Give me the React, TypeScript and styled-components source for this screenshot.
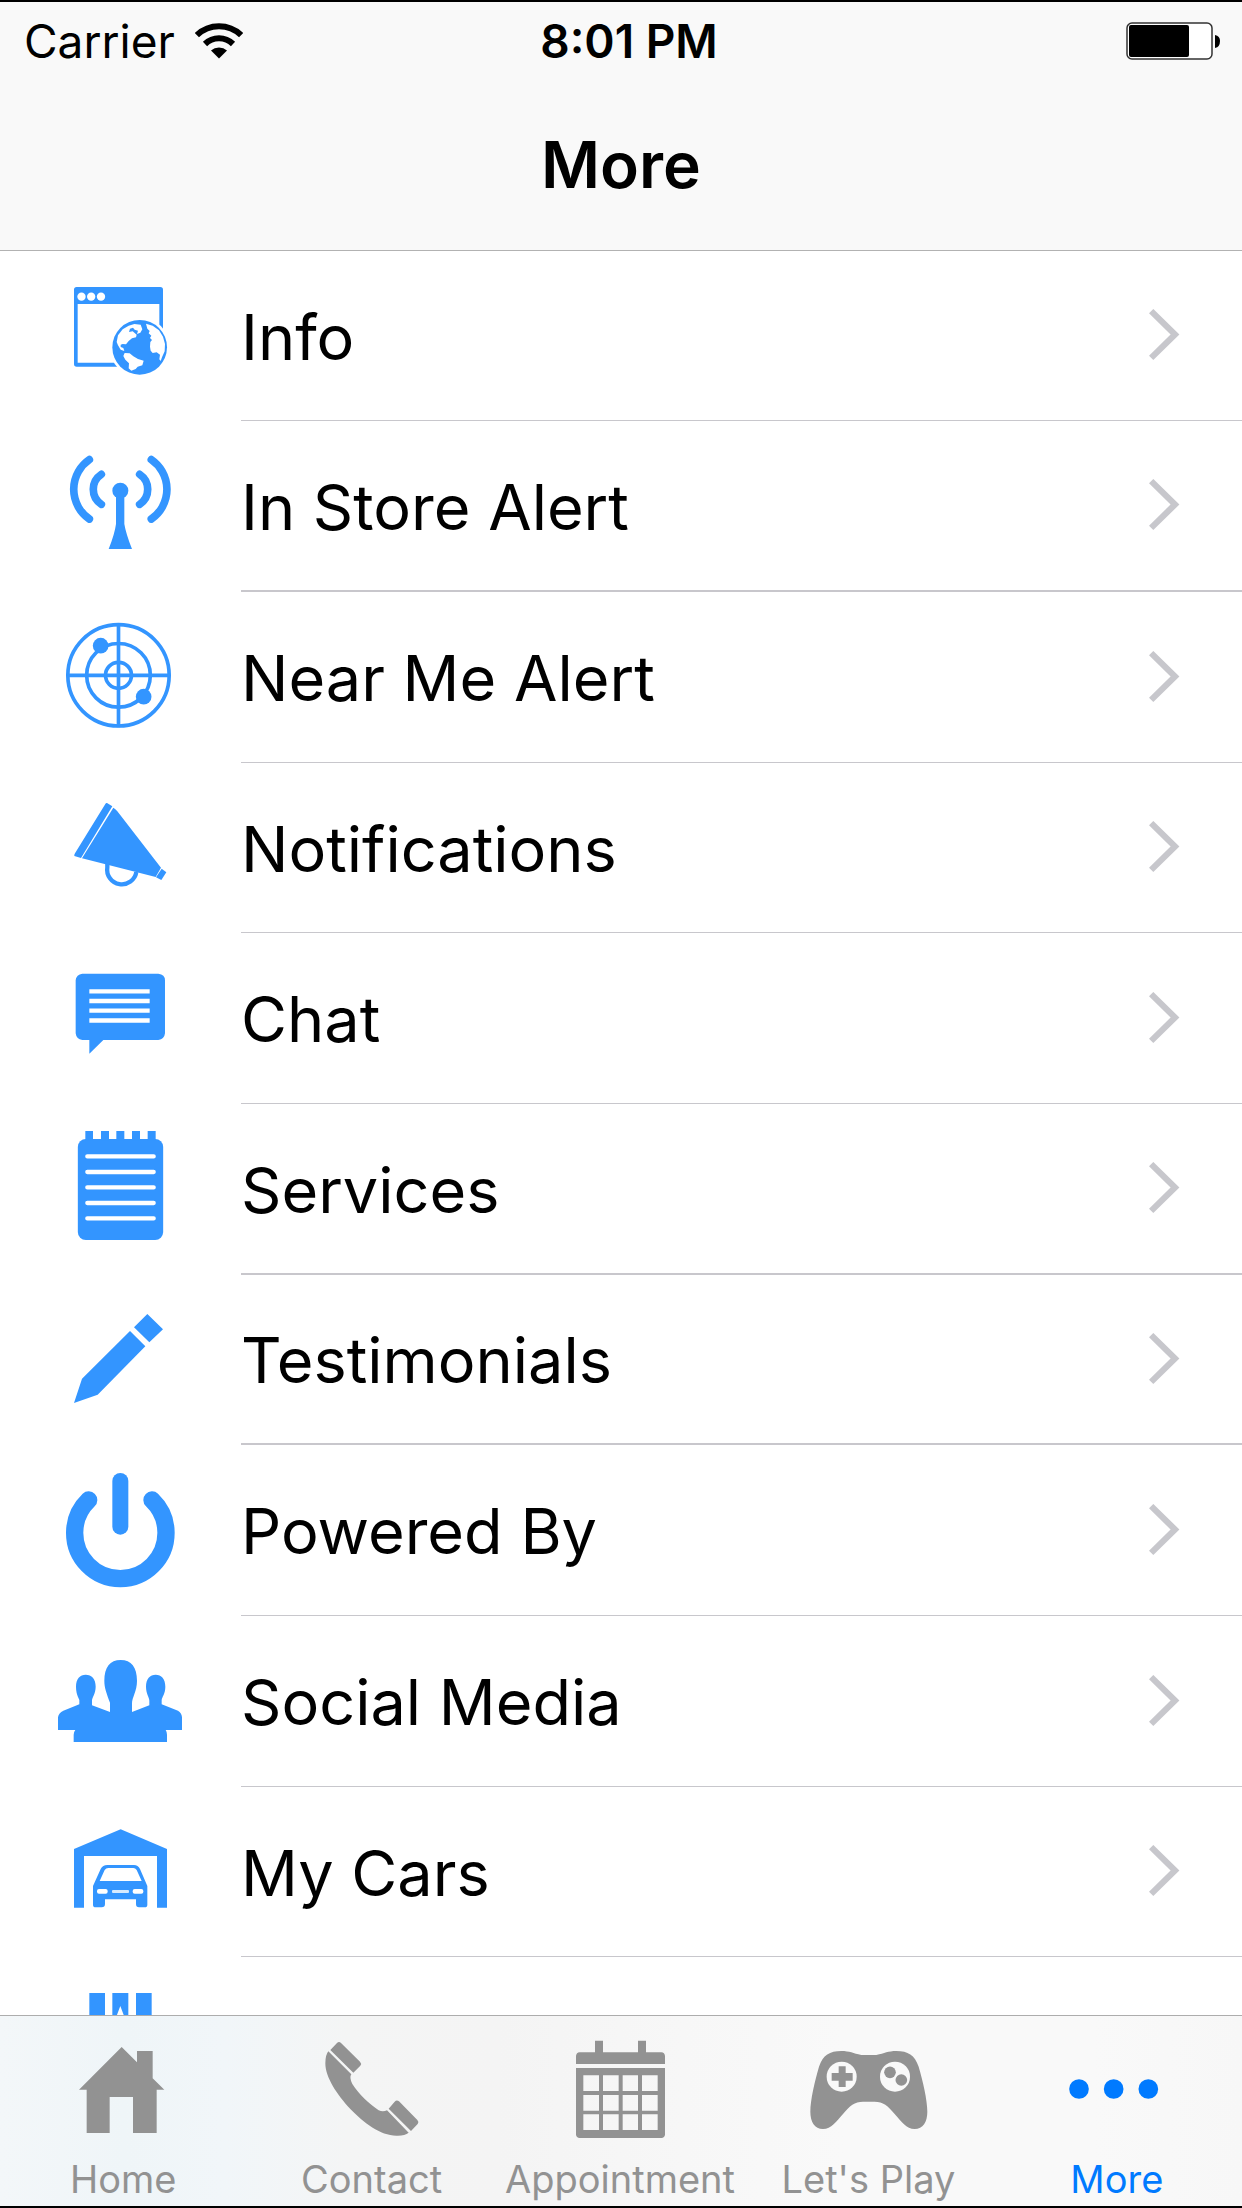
import React from "react";
import styled, { createGlobalStyle } from "styled-components";

const BLUE = "#3395ff";
const TINT = "#007aff";
const GRAY = "#929292";
const HAIRLINE = "#c8c7cc";

const GlobalStyle = createGlobalStyle`
  *, *::before, *::after { box-sizing: border-box; }
  body {
    margin: 0;
    background: #ffffff;
    color: #000000;
    font-family: Inter, "Liberation Sans", sans-serif;
  }
`;

const Screen = styled.div`
  display: flex;
  flex-direction: column;
  height: 100vh;
  border-top: 2px solid #000000;
  border-bottom: 2px solid #000000;
  overflow: hidden;
`;

const Header = styled.header`
  flex: none;
  background: #f9f9f9;
  border-bottom: 1px solid #b2b2b2;
`;

const StatusBar = styled.div`
  display: grid;
  grid-template-columns: 1fr auto 1fr;
  align-items: center;
  height: 78px;
  padding: 0 8px 0 24px;
  font-size: 46px;
  line-height: 56px;
`;

const Carrier = styled.div`
  display: flex;
  align-items: center;
  gap: 20px;
`;

const Time = styled.time`
  font-weight: 600;
`;

const Battery = styled.svg`
  justify-self: end;
  margin-right: 14px;
`;

const TitleBar = styled.div`
  display: flex;
  align-items: center;
  justify-content: center;
  height: 170px;
`;

const Title = styled.h1`
  margin: 0;
  font-size: 64px;
  font-weight: 600;
  line-height: 78px;
`;

const Main = styled.main`
  flex: 1;
  min-height: 0;
  overflow: hidden;
`;

const List = styled.ul`
  margin: 0;
  padding: 0;
  list-style: none;
`;

const Item = styled.li`
  height: 171px;

  &:nth-child(3n + 1) {
    height: 170px;
  }
`;

const RowLink = styled.a`
  display: flex;
  height: 100%;
  color: inherit;
  text-decoration: none;
`;

const RowIcon = styled.svg`
  flex: none;
  width: 132px;
  height: 132px;
  margin: 18px 55px 0 54px;
  fill: ${BLUE};
`;

const RowBody = styled.span<{ $heavy?: boolean }>`
  flex: 1;
  display: flex;
  align-items: center;
  justify-content: space-between;
  padding: 2px 62px 0 0;
  border-bottom: ${(p) => (p.$heavy ? 2 : 1)}px solid ${HAIRLINE};
  font-size: 63px;
  line-height: 78px;
`;

const TabBar = styled.nav`
  flex: none;
  display: flex;
  border-top: 1px solid #adadad;
  background: linear-gradient(
    to right,
    #f3f7f9 0%,
    #eff5f8 10%,
    #f1f6f9 18%,
    #f4f5f5 28%,
    #f4f4f4 40%,
    #f7f7f7 55%,
    #f9f9f9 68%,
    #f9f9f9 88%,
    #f7f7f7 100%
  );
`;

const Tab = styled.a<{ $active?: boolean }>`
  flex: 1 1 0;
  min-width: 0;
  display: flex;
  flex-direction: column;
  align-items: center;
  gap: 14px;
  padding: 21px 2px 4px 0;
  color: ${(p) => (p.$active ? TINT : GRAY)};
  font-size: 38px;
  line-height: 46px;
  white-space: nowrap;
  text-decoration: none;
`;

const TabIcon = styled.svg`
  width: 120px;
  height: 105px;
  fill: currentColor;
`;

const Chevron = () => (
  <svg width="31" height="55" viewBox="149 174 93 165" aria-hidden="true">
    <path d="M155.500 180.500 227 250.500 155.500 320.500" fill="none" stroke="#c7c7cc" strokeWidth="18.500" />
  </svg>
);

type Entry = { label: string; heavy?: boolean; viewBox: string; art: React.ReactNode };

const entries: Entry[] = [
  {
    label: "Info",
    viewBox: "162 57 396 396",
    art: (
      <>
        <path
          fillRule="evenodd"
          d="M230 111H481Q489 111 489 119V350H230Q222 350 222 342V119Q222 111 230 111ZM233 162V338H478V162Z"
        />
        <g fill="#fff">
          <circle cx="244.500" cy="140" r="12.500" />
          <circle cx="273.500" cy="140" r="12.500" />
          <circle cx="303" cy="140" r="12.500" />
          <circle cx="419" cy="292" r="90" />
          <rect x="440" y="292" width="60" height="70" />
        </g>
        <circle cx="419" cy="292" r="82" />
        <g fill="#fff">
          <path d="M368 238 386 227 403 222 422 224 427 238 421 248 411 252 414 242 404 239 399 233 390 236 387 246 398 244 410 254 408 262 396 265 386 273 378 283 368 282 362 284 362 291 370 294 373 303 362 299 354 286 350 276 354 256Z" />
          <path d="M438 221 458 227 477 241 489 260 495 282 494 304 486 322 482 333 478 328 480 314 470 307 458 309 452 302 450 290 451 276 456 270 450 264 454 257 446 250 449 243 442 236Z" />
          <path d="M374 309 389 310 400 319 414 327 431 332 427 346 413 350 407 357 394 362 386 355 387 340 376 329 370 318Z" />
        </g>
      </>
    ),
  },
  {
    label: "In Store Alert",
    heavy: true,
    viewBox: "162 567 396 396",
    art: (
      <>
        <g fill="none" stroke={BLUE} strokeWidth="23" strokeLinecap="round">
          <path d="M268 629A108 108 0 0 0 268 807M304 673A54 54 0 0 0 304 763" />
          <path d="M454 629A108 108 0 0 1 454 807M419 673A54 54 0 0 1 419 763" />
        </g>
        <circle cx="361" cy="722" r="24" />
        <path d="M348 735H373V822Q378 852 396 897H326Q344 852 348 822Z" />
      </>
    ),
  },
  {
    label: "Near Me Alert",
    viewBox: "162 60 396 396",
    art: (
      <>
        <g fill="none" stroke={BLUE} strokeWidth="11">
          <circle cx="355.500" cy="256" r="152" />
          <circle cx="355.500" cy="256" r="95.500" />
          <circle cx="355.500" cy="256" r="39" />
          <path d="M355.500 100V412M200 256H511" />
        </g>
        <circle cx="302" cy="167" r="23.500" />
        <circle cx="431" cy="320" r="23.500" />
      </>
    ),
  },
  {
    label: "Notifications",
    viewBox: "162 573 396 396",
    art: (
      <>
        <path d="M321 639 337 649 243 804 223 798Q222 795 225 790L316 642Q318 638 321 639Z" />
        <path d="M340 653Q346 656 352 664L483 833 467 861 246 805Z" />
        <path d="M485 836 499 847 484 870 468 862Z" />
        <path d="M322 822V832A44 44 0 0 0 409 846" fill="none" stroke={BLUE} strokeWidth="13" />
      </>
    ),
  },
  {
    label: "Chat",
    viewBox: "162 63 396 396",
    art: (
      <>
        <path d="M247 131H475Q495 133 495 151V310Q493 328 475 330H310L268 371V330H247Q229 328 227 310V151Q229 133 247 131Z" />
        <path d="M268 184H449M268 213H449M268 242H449M268 271.500H449" stroke="#fff" strokeWidth="13" />
      </>
    ),
  },
  {
    label: "Services",
    heavy: true,
    viewBox: "162 576 396 396",
    art: (
      <>
        <rect x="233.500" y="627" width="256" height="303" rx="24" />
        <path d="M256 603H279V632H256ZM303 603H327V632H303ZM349 603H373V632H349ZM396 603H420V632H396ZM443 603H467V632H443Z" />
        <path
          d="M262 679H461M262 726H461M262 772H461M262 819H461M262 865H461"
          stroke="#fff"
          strokeWidth="13"
          strokeLinecap="round"
        />
      </>
    ),
  },
  {
    label: "Testimonials",
    heavy: true,
    viewBox: "162 69 396 396",
    art: <path d="M222 399 246 326 390 183 436 229 293 374ZM442 132 489 178 448 217 402 172Z" />,
  },
  {
    label: "Powered By",
    viewBox: "162 579 396 396",
    art: (
      <>
        <rect x="337" y="609" width="48" height="185" rx="24" />
        <path
          d="M266 690A137 137 0 1 0 456 690"
          fill="none"
          stroke={BLUE}
          strokeWidth="52"
          strokeLinecap="round"
        />
      </>
    ),
  },
  {
    label: "Social Media",
    viewBox: "162 72 396 396",
    art: (
      <path d="M174 360V322Q176 308 190 302L238 283V270C230 254 228 242 228 230C228 206 240 194 257 194C275 194 287 206 287 230C287 252 276 262 276 272V286L330 306V278C320 250 313 234 313 212C313 172 330 150 362 150C394 150 411 172 411 212C411 244 396 262 396 280V306L448 286V272C448 262 438 252 438 230C438 206 450 194 467 194C484 194 496 206 496 230C496 252 486 260 485 270V283L534 302Q545 308 546 322V360H497Q501 366 501 374V396H221V374Q221 366 226 360Z" />
    ),
  },
  {
    label: "My Cars",
    viewBox: "162 585 396 396",
    art: (
      <>
        <path d="M222 717 362 658 501 717V893H471V738H252V893H222Z" />
        <path
          fillRule="evenodd"
          d="M279 828 302 777Q308 765 322 765H402Q414 765 420 777L442 828V884Q442 892 434 892H417Q408 892 408 882V868H315V882Q315 892 305 892H287Q279 892 279 884ZM299 813H425L410 780Q406 774 400 774H325Q318 774 314 780Z"
        />
        <g fill="#fff">
          <rect x="291" y="837" width="32" height="14" rx="6" />
          <rect x="336" y="840" width="51" height="9" rx="3" opacity="0.8" />
          <rect x="398" y="837" width="32" height="14" rx="6" />
        </g>
      </>
    ),
  },
];

const tabs = [
  {
    label: "Home",
    viewBox: "193 291 360 315",
    art: <path d="M369 321 415 367V333H462V415L497 449H474V579H403V471H333V579H264V449H241Z" />,
  },
  {
    label: "Contact",
    viewBox: "935 291 360 315",
    art: (
      <>
        <path d="M1010 309Q1016 303 1022 309L1079 365Q1085 371 1080 377L1059 398 990 330Z" />
        <path d="M984 334 1053 403Q1046 412 1056 432C1075 463 1108 492 1135 511Q1148 517 1160 511L1225 578Q1213 588 1188 587C1140 587 1090 548 1050 507C1010 464 975 412 975 370Q975 345 984 334Z" />
        <path d="M1183 485Q1189 479 1196 484L1251 540Q1257 546 1252 552L1232 573 1165 506Z" />
      </>
    ),
  },
  {
    label: "Appointment",
    viewBox: "360 291 360 315",
    art: (
      <>
        <path d="M408 372V348Q409 338 419 337H465V302H489V337H594V302H618V337H664Q674 338 675 348V372Z" />
        <path
          fillRule="evenodd"
          d="M408 384H675V584Q674 593 664 594H419Q409 593 408 584ZM430 406V453H477V406ZM489 406V453H536V406ZM548 406V453H594V406ZM606 406V453H653V406ZM430 465V512H477V465ZM489 465V512H536V465ZM548 465V512H594V465ZM606 465V512H653V465ZM430 523V570H477V523ZM489 523V570H536V523ZM548 523V570H594V523ZM606 523V570H653V523Z"
        />
      </>
    ),
  },
  {
    label: "Let's Play",
    viewBox: "1105 291 360 315",
    art: (
      <>
        <path d="M1265 345H1310C1335 340 1345 333 1370 333C1405 333 1425 345 1437 380C1450 425 1463 480 1463 515C1463 545 1450 567 1425 567C1400 567 1385 545 1365 522C1345 497 1330 485 1305 485H1270C1245 485 1230 497 1210 522C1190 545 1175 567 1150 567C1125 567 1112 545 1112 515C1112 480 1125 425 1138 380C1150 345 1170 333 1205 333C1230 333 1240 340 1265 345Z" />
        <circle cx="1206" cy="410" r="45" fill="#f9f9f9" />
        <circle cx="1366" cy="410" r="45" fill="#f9f9f9" />
        <path d="M1197 379H1218V399H1239V422H1218V441H1197V422H1176V399H1197Z" />
        <circle cx="1351" cy="397" r="17.500" />
        <circle cx="1385" cy="420" r="17.500" />
      </>
    ),
  },
  {
    label: "More",
    active: true,
    viewBox: "650 291 360 315",
    art: (
      <>
        <circle cx="716" cy="447" r="29.500" />
        <circle cx="820" cy="447" r="29.500" />
        <circle cx="924" cy="447" r="29.500" />
      </>
    ),
  },
];

export default function App() {
  return (
    <>
      <GlobalStyle />
      <Screen>
        <Header>
          <StatusBar>
            <Carrier>
              <span>Carrier</span>
              <svg width="48" height="36" viewBox="0 0 48 36" aria-hidden="true">
                <g fill="none" stroke="#000" strokeWidth="6">
                  <path d="M1.900 12.200A32 32 0 0 1 46.100 12.200" />
                  <path d="M10 21A20 20 0 0 1 38 21" />
                </g>
                <path d="M16 27.500A12 12 0 0 1 32 27.500L24 35.500Z" />
              </svg>
            </Carrier>
            <Time>8:01 PM</Time>
            <Battery width="94" height="38" viewBox="0 0 94 38" aria-hidden="true">
              <rect x="1" y="1" width="85" height="36" rx="5" fill="#fff" stroke="#333" strokeWidth="1.500" />
              <rect x="3" y="3" width="60" height="32" rx="2" />
              <path d="M89 13Q94 14 94 19Q94 25 89 26Z" />
            </Battery>
          </StatusBar>
          <TitleBar>
            <Title>More</Title>
          </TitleBar>
        </Header>

        <Main>
          <List>
            {entries.map((entry) => (
              <Item key={entry.label}>
                <RowLink href="#">
                  <RowIcon viewBox={entry.viewBox} aria-hidden="true">
                    {entry.art}
                  </RowIcon>
                  <RowBody $heavy={entry.heavy}>
                    {entry.label}
                    <Chevron />
                  </RowBody>
                </RowLink>
              </Item>
            ))}
            <Item>
              <RowIcon viewBox="162 105 396 396" aria-hidden="true">
                <path d="M268 159H315V420H268ZM337 159H385V420H337ZM408 159H455V420H408Z" />
                <path d="M361 198 373 230H349Z" fill="#fff" />
              </RowIcon>
            </Item>
          </List>
        </Main>

        <TabBar>
          {tabs.map((tab) => (
            <Tab key={tab.label} href="#" $active={tab.active} aria-current={tab.active ? "page" : undefined}>
              <TabIcon viewBox={tab.viewBox} aria-hidden="true">
                {tab.art}
              </TabIcon>
              {tab.label}
            </Tab>
          ))}
        </TabBar>
      </Screen>
    </>
  );
}
